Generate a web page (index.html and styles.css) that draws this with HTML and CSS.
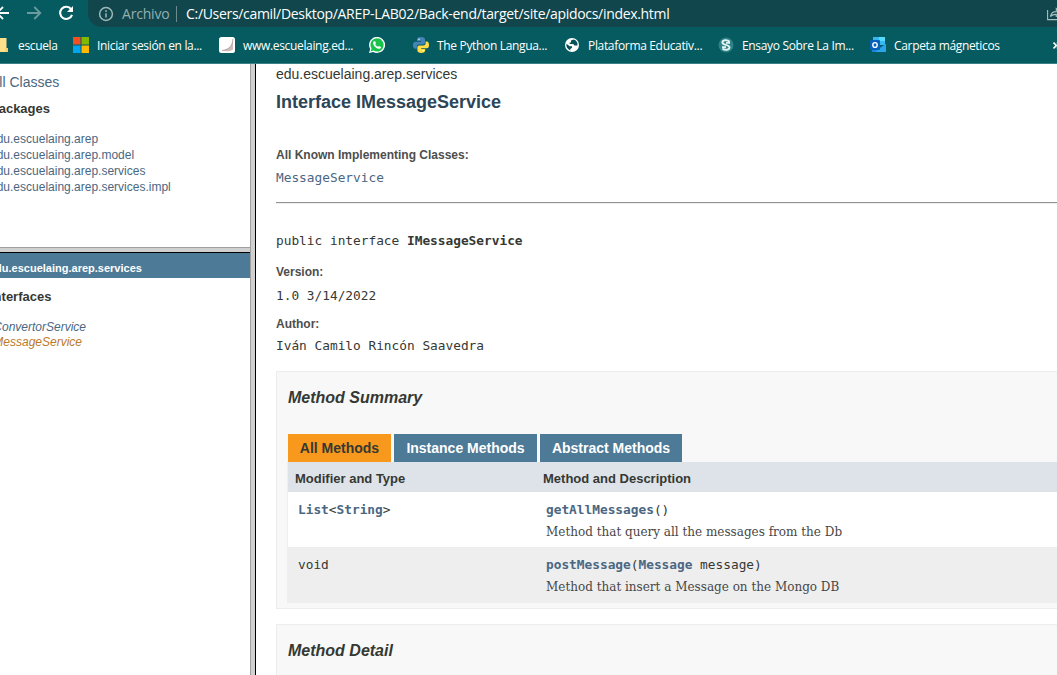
FILE: index.html
```
<!DOCTYPE html>
<html lang="es">
<head>
<meta charset="utf-8">
<title>IMessageService</title>
<link rel="stylesheet" href="styles.css">
</head>
<body>
<header class="browser">
  <div class="toolbar">
    <svg class="nav" width="88" height="27" viewBox="0 0 88 27" fill="none" stroke-width="1.8">
      <path d="M9 13H-3M3 7L-3 13L3 19" stroke="#fff"/>
      <path d="M27 13H40M34.3 7L40.3 13L34.3 19" stroke="#6b9b9f"/>
      <path d="M71.2 9.3A6.1 6.1 0 1 0 72 14.8" stroke="#fff" stroke-width="2.1"/>
      <path d="M73 6V12H67Z" fill="#fff"/>
    </svg>
    <div class="omnibox">
      <svg width="16" height="16" viewBox="0 0 16 16" fill="none" stroke="#9fb9bb" stroke-width="1.5"><circle cx="8" cy="8" r="6.4"/><path d="M8 7.2V11.6M8 4.3V5.9"/></svg>
      <span class="scheme">Archivo</span>
      <span class="divider"></span>
      <span class="url">C:/Users/camil/Desktop/AREP-LAB02/Back-end/target/site/apidocs/index.html</span>
      <svg class="share" width="10" height="14" viewBox="0 0 10 14" fill="none" stroke="#a9c0c2" stroke-width="1.1"><path d="M.6 3V12.6H10M3.4 9.5C4 6.5 6 4.6 9.3 4.6V1.5L12 4M3.4 9.5C5 8 7 7.3 9.3 7.4V10"/></svg>
    </div>
  </div>
  <nav class="bookmarks">
    <div class="mark m1"><svg width="8" height="16" viewBox="0 0 8 16"><path d="M0 1H6.5V11L8 12V15H0Z" fill="#ffe08a"/><path d="M5.5 11H8V15H5.5Z" fill="#f8cf60"/></svg><span>escuela</span></div>
    <div class="mark m2"><svg width="16" height="16" viewBox="0 0 16 16"><path d="M0 0H7.5V7.5H0Z" fill="#f25022"/><path d="M8.5 0H16V7.5H8.5Z" fill="#7fba00"/><path d="M0 8.5H7.5V16H0Z" fill="#00a4ef"/><path d="M8.5 8.5H16V16H8.5Z" fill="#ffb900"/></svg><span>Iniciar sesión en la...</span></div>
    <div class="mark m3"><svg width="16" height="16" viewBox="0 0 16 16"><rect width="16" height="16" rx="2.5" fill="#fff"/><path d="M14 2C13.5 8 11 12.5 3 13.5C8 15 14 14 14 12Z" fill="#cdbcbb"/><path d="M14 2C13.5 8 11 12.5 3 13.5" stroke="#a28b8d" fill="none" stroke-width=".7"/></svg><span>www.escuelaing.ed...</span></div>
    <div class="mark m4"><svg width="16" height="16" viewBox="0 0 16 16"><path d="M0 16L1.2 12A8 8 0 1 1 4.2 14.9Z" fill="#fff"/><path d="M1.6 14.4L2.5 11.5A6.6 6.6 0 1 1 4.7 13.6Z" fill="#18c34b"/><path d="M5 4.3L6.1 4.2L7 6.2L6.2 7.2C6.8 8.5 7.6 9.2 9 9.8L9.9 8.9L12 9.9C12 11.2 10.8 12 9.6 11.8C6.6 11.2 4 8.2 4 5.8C4 5.2 4.4 4.6 5 4.3Z" fill="#fff"/></svg></div>
    <div class="mark m5"><svg width="16" height="16" viewBox="0 0 16 16"><path d="M8 0C5 0 4 1 4 2.5V4H8.2V4.7H2.5C.7 4.7 0 6.2 0 8.2S.8 11.7 2.5 11.7H3.8V9.7C3.8 8.3 5 7.5 6 7.5H10C11.2 7.5 12 6.6 12 5.5V2.5C12 .8 10.5 0 8 0Z" fill="#4584b6"/><path d="M12.6 4.5V6.2C12.6 7.8 11.5 8.4 10.2 8.4H6.3C5.1 8.4 4.4 9.3 4.4 10.4V13.5C4.4 15.1 5.9 16 8.3 16S12.2 15 12.2 13.5V12H8.2V11.3H13.8C15.3 11.3 16 10 16 8S15.3 4.5 13.8 4.5Z" fill="#ffdc48"/><circle cx="6" cy="2.2" r=".7" fill="#fff"/><circle cx="10.3" cy="13.8" r=".7" fill="#fff"/></svg><span>The Python Langua...</span></div>
    <div class="mark m6"><svg width="14" height="14" viewBox="0 0 14 14"><circle cx="7" cy="7" r="7" fill="#fff"/><path d="M1.5 5.8L4.7 8.2H7V9.8L5.3 11V12.4A5.6 5.6 0 0 1 1.5 5.8ZM8.5 1.6L6 2.6V4.5H4.6V6H8.2L9.5 7.6H12.5A5.6 5.6 0 0 0 8.5 1.6Z" fill="#075158"/></svg><span>Plataforma Educativ...</span></div>
    <div class="mark m7"><svg width="16" height="16" viewBox="0 0 16 16"><circle cx="8" cy="8" r="7.5" fill="#2f8288"/><path d="M11.6 4.6C9 2.2 4.3 3 4.4 5.6C4.6 8.2 11.4 7.6 11.5 10.3C11.6 13 7 13.6 4.4 11.4M8 5.8H12M4 10.1H8" fill="none" stroke="#e4f3f3" stroke-width="1.9"/></svg><span>Ensayo Sobre La Im...</span></div>
    <div class="mark m8"><svg width="16" height="16" viewBox="0 0 16 16"><path d="M3 0H15V8H3Z" fill="#35b8f1"/><path d="M9 0H15V4H9Z" fill="#55d9fd"/><path d="M2 7L9 11L16 7V15H2Z" fill="#1684d8"/><path d="M16 7V15H5Z" fill="#2ba4e8"/><rect y="3" width="10" height="10" rx="1" fill="#0761b8"/><ellipse cx="5" cy="8" rx="2.2" ry="2.4" fill="none" stroke="#fff" stroke-width="1.4"/></svg><span>Carpeta mágneticos</span></div>
    <svg class="more" width="4" height="9" viewBox="0 0 4 9" fill="none" stroke="#fff" stroke-width="1.6"><path d="M.5 1.5L3.3 4.5L.5 7.5M4 1.5L7 4.5L4 7.5"/></svg>
  </nav>
</header>
<div class="frames">
  <div class="side">
    <section class="packages">
      <a class="all">All Classes</a>
      <h2>Packages</h2>
      <ul>
        <li>edu.escuelaing.arep</li>
        <li>edu.escuelaing.arep.model</li>
        <li>edu.escuelaing.arep.services</li>
        <li>edu.escuelaing.arep.services.impl</li>
      </ul>
    </section>
    <section class="classes">
      <h1><span>edu.escuelaing.arep.services</span></h1>
      <h2>Interfaces</h2>
      <ul>
        <li>IConvertorService</li>
        <li class="current">IMessageService</li>
      </ul>
    </section>
  </div>
  <div class="splitter"></div>
  <main class="doc">
    <div class="pkg">edu.escuelaing.arep.services</div>
    <h1 class="title">Interface IMessageService</h1>
    <div class="label known">All Known Implementing Classes:</div>
    <div class="code link impl">MessageService</div>
    <div class="rule"></div>
    <div class="code decl">public interface <b>IMessageService</b></div>
    <div class="label version">Version:</div>
    <div class="code number">1.0 3/14/2022</div>
    <div class="label author">Author:</div>
    <div class="code person">Iván Camilo Rincón Saavedra</div>
    <section class="panel summary">
      <h3>Method Summary</h3>
      <div class="tabs"><span class="tab active">All Methods</span><span class="tab instance">Instance Methods</span><span class="tab abstract">Abstract Methods</span></div>
      <div class="table">
        <div class="row head"><span>Modifier and Type</span><span>Method and Description</span></div>
        <div class="row">
          <div class="code"><b class="link">List</b>&lt;<b class="link">String</b>&gt;</div>
          <div><div class="code"><b class="link">getAllMessages</b>()</div><p>Method that query all the messages from the Db</p></div>
        </div>
        <div class="row alt">
          <div class="code">void</div>
          <div><div class="code"><b class="link">postMessage</b>(<b class="link">Message</b> message)</div><p>Method that insert a Message on the Mongo DB</p></div>
        </div>
      </div>
    </section>
    <section class="panel detail"><h3>Method Detail</h3></section>
  </main>
</div>
</body>
</html>
```
FILE: styles.css
```
* { box-sizing: border-box; }
body { margin: 0; width: 1057px; height: 675px; overflow: hidden; display: flex; flex-direction: column; background: #fff; color: #353833; font-family: "Liberation Sans", Arial, sans-serif; }
h1, h2, h3, p, ul { margin: 0; padding: 0; }
ul { list-style: none; }
svg { display: block; flex: none; }

.browser { height: 64px; flex: none; background: #055b60; border-bottom: 1px solid #398087; color: #fff; font-family: "Open Sans", "Noto Sans", sans-serif; white-space: nowrap; }
.toolbar { display: flex; height: 27px; }
.omnibox { flex: 1; display: flex; align-items: center; background: #10464c; border-radius: 0 0 0 14px; padding-left: 10px; font-size: 14px; }
.scheme { width: 54px; margin-left: 8px; color: #94afb2; letter-spacing: -.2px; }
.divider { width: 1px; height: 16px; background: #6b8b8f; }
.url { margin-left: 9px; letter-spacing: -.31px; }
.share { margin-left: auto; }
.bookmarks { display: flex; height: 36px; align-items: center; font-size: 12px; }
.mark { display: flex; align-items: center; flex: none; letter-spacing: -.33px; }
.m1 { width: 73px; gap: 10px; letter-spacing: -.35px; }
.m2 { width: 146px; gap: 8px; }
.m3 { width: 150px; gap: 8px; }
.m4 { width: 44px; }
.m5 { width: 152px; gap: 8px; }
.m6 { width: 153px; gap: 9px; }
.m7 { width: 152px; gap: 8px; }
.m8 { width: 150px; gap: 8px; }
.more { margin-left: auto; }

.frames { flex: 1; display: flex; min-height: 0; }
.side { width: 250px; flex: none; overflow: hidden; white-space: nowrap; color: #4a6782; font-size: 12px; }
.side ul, .side h2, .all { margin-left: -10px; }
.side h2 { font-size: 13px; line-height: 16px; color: #353833; }
.packages { height: 188px; padding-top: 10px; border-bottom: 4px solid #d0d0d0; box-shadow: inset 0 -1px #a0a0a0; }
.all { display: block; font-size: 14px; line-height: 16px; }
.packages h2 { margin-top: 11px; }
.packages ul { margin-top: 14px; line-height: 16px; }
.classes { border-top: 1px solid #000; }
.classes h1 { height: 25px; background: #4d7a97; color: #fff; font-size: 11px; line-height: 31px; }
.classes h1 span { margin-left: -11px; }
.classes h2 { margin-top: 11px; }
.classes ul { margin-top: 15px; font-style: italic; line-height: 15px; }
.current { color: #bb7a2a; }

.splitter { width: 6px; flex: none; background: #d0d0d0; border-left: 1px solid #a0a0a0; border-right: 1px solid #000; }
.doc { flex: 1; min-width: 0; overflow: hidden; padding-left: 20px; }
.pkg { font-size: 14px; line-height: 20px; }
.title { margin-top: 6px; font-size: 18px; line-height: 24px; color: #2c4557; }
.label { font-size: 12px; font-weight: bold; line-height: 16px; color: #4e4e4e; }
.known { margin-top: 33px; }
.code { font: 12.8px/16px "DejaVu Sans Mono", monospace; white-space: pre; }
.link { color: #4a6782; }
.impl { margin-top: 7px; }
.rule { height: 2px; margin-top: 16px; border-top: 1px solid #929292; border-bottom: 1px solid #eee; }
.decl { margin-top: 29px; }
.version { margin-top: 15px; }
.number { margin-top: 8px; }
.author { margin-top: 12px; }
.person { margin-top: 6px; }
.panel { border: 1px solid #ededed; border-right: 0; background: #f8f8f8; padding: 16px 0 0 11px; }
.panel h3 { font-size: 16px; line-height: 20px; font-style: italic; }
.summary { height: 238px; margin-top: 17px; }
.detail { height: 70px; margin-top: 15px; }
.tabs { display: flex; gap: 3px; margin-top: 26px; font-size: 14px; font-weight: bold; line-height: 28px; text-align: center; color: #fff; }
.tab { background: #4d7a97; }
.active { width: 103px; background: #f8981d; color: #353833; }
.instance { width: 143px; }
.abstract { width: 142px; }
.table { margin-left: -1px; border-left: 1px solid #eee; }
.row { height: 55px; display: grid; grid-template-columns: 248px 1fr; padding: 10px 0 0 10px; background: #fff; }
.alt { height: 56px; margin-left: -1px; padding-left: 11px; background: #eeeeef; }
.row.head { height: 30px; padding: 0 0 0 7px; background: #dee3e9; font-size: 13px; font-weight: bold; line-height: 33px; }
.row p { margin-top: 5px; font: 13.35px/18px "DejaVu Serif Condensed", "DejaVu Serif", serif; color: #474747; white-space: nowrap; }
```
